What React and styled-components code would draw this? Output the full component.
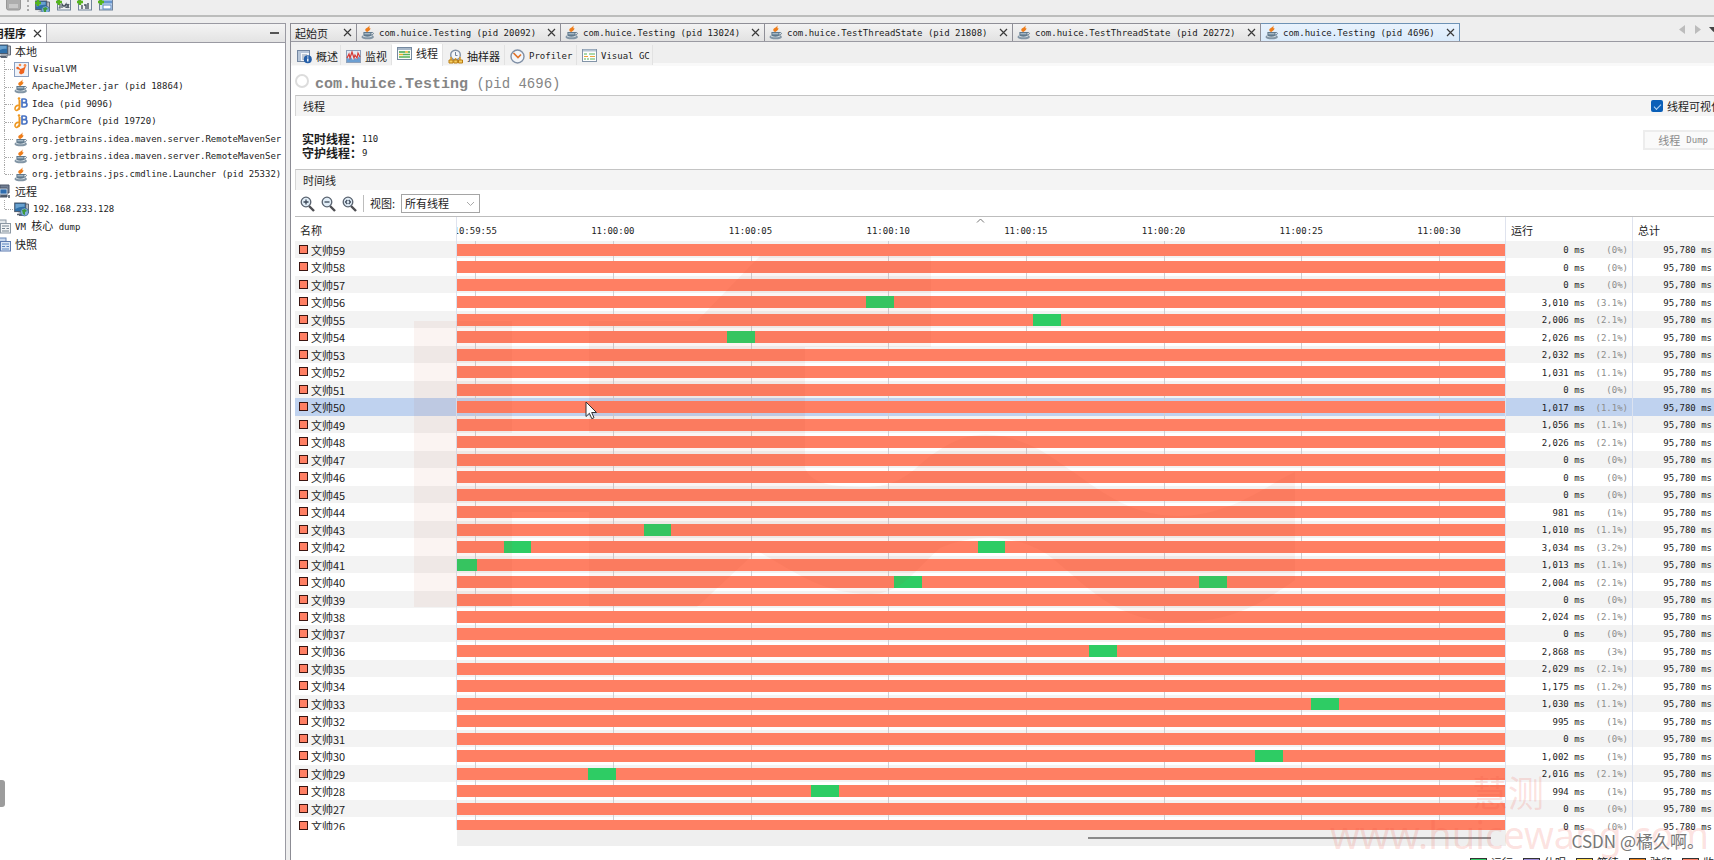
import React from "react";
import styled, { createGlobalStyle, css } from "styled-components";

const latin = `"DejaVu Sans Mono", "Noto Sans CJK SC", monospace`;
const cjk = `"Noto Sans CJK SC", "Liberation Sans", sans-serif`;
const BLOCKED = "#ff7f63";
const RUNNING = "#2ecc64";

const Global = createGlobalStyle`
  * { box-sizing: border-box; }
  body { margin: 0; background: #eeeeee; color: #1c1c1c; font: 9px/17px ${latin}; }
  button, select, input { font: inherit; color: inherit; margin: 0; }
`;

const App_ = styled.div`
  position: relative;
  height: 100vh;
  display: flex;
  flex-direction: column;
  overflow: hidden;
  white-space: nowrap;
`;

const Toolbar = styled.header`
  height: 17px;
  flex: none;
  margin-bottom: 6px;
  padding-left: 6px;
  display: flex;
  align-items: flex-start;
  gap: 6px;
  overflow: hidden;
  border-bottom: 2px solid #bcbdbc;
`;

const ToolButton = styled.button`
  display: block;
  width: 15px;
  height: 12px;
  padding: 0;
  border: 0;
  background: none;
  overflow: hidden;
  svg { display: block; }
`;

const ToolSeparator = styled.span`
  width: 1px;
  height: 11px;
  border-left: 2px dotted #aaaaaa;
`;

const Workspace = styled.div`
  flex: 1;
  min-height: 0;
  display: flex;
  gap: 4px;
`;

const Sidebar = styled.aside`
  width: 286px;
  flex: none;
  background: #ffffff;
  border: solid #9a9aa2;
  border-width: 1px 1px 0 0;
  overflow: hidden;
`;

const SideTabs = styled.div`
  height: 19px;
  display: flex;
  align-items: center;
  justify-content: space-between;
  padding-right: 6px;
  border-bottom: 1px solid #9a9aa2;
  background: linear-gradient(#f4f4f4, #e3e3e3);
`;

const SideTab = styled.div`
  height: 18px;
  margin-left: -18px;
  padding-right: 4px;
  display: flex;
  align-items: center;
  gap: 7px;
  background: #ffffff;
  border-right: 1px solid #9a9aa2;
  font: bold 11px/17px ${cjk};
`;

const IconButton = styled.button`
  display: grid;
  place-items: center;
  width: 9px;
  height: 12px;
  padding: 0;
  border: 0;
  background: none;
  flex: none;
`;

const Tree = styled.ul`
  list-style: none;
  margin: 0;
  padding: 0;
`;

const TreeRow = styled.li`
  height: 17px;
  display: flex;
  align-items: center;
  gap: 4px;
  padding-left: ${(p) => (p.$child ? 4 : 0)}px;
  margin-left: ${(p) => (p.$child ? 0 : -4)}px;
  &:nth-child(even) { height: 18px; }
  svg { flex: none; }
`;

const Branch = styled.span`
  flex: none;
  align-self: stretch;
  width: 9px;
  margin-right: -3px;
  border-left: 1px dotted #a8a8a8;
  height: ${(p) => (p.$last ? "9px" : "auto")};
  &::after {
    content: "";
    display: block;
    height: 9px;
    border-bottom: 1px dotted #a8a8a8;
  }
`;

const Zh = styled.span`
  font: 11px/17px ${cjk};
`;

const Editor = styled.main`
  flex: 1;
  min-width: 0;
  display: flex;
  flex-direction: column;
  background: #ffffff;
  border-left: 1px solid #8c8c94;
`;

const FileTabs = styled.nav`
  height: 19px;
  flex: none;
  display: flex;
  background: #eeeeee;
  border-bottom: 1px solid #9a9aa2;
`;

const FileTab = styled.div`
  display: flex;
  align-items: center;
  justify-content: space-between;
  width: ${(p) => p.$width}px;
  padding: 0 4px;
  border: 1px solid #8f8f97;
  border-left-width: 0;
  border-bottom: 0;
  background: linear-gradient(#f3f3f3, #e2e2e2);
  ${(p) =>
    p.$active &&
    css`
      border-color: #6d92b5;
      background: linear-gradient(#e9f3fd, #d9eafb);
    `}
`;

const FileLabel = styled.button`
  display: flex;
  align-items: center;
  gap: 4px;
  height: 17px;
  padding: 0;
  border: 0;
  background: none;
  span { padding-top: 1px; }
`;

const TabNav = styled.div`
  flex: 1;
  display: flex;
  justify-content: flex-end;
  align-items: center;
  gap: 7px;
  height: 12px;
  margin-right: -4px;
`;

const ViewTabs = styled.nav`
  flex: none;
  height: 24px;
  display: flex;
  align-items: flex-end;
  padding: 0 1px 1px;
  background: linear-gradient(#efefef 21px, #f9f9f9 21px);
`;

const ViewTab = styled.button`
  height: ${(p) => (p.$active ? 22 : 20)}px;
  width: ${(p) => p.$width}px;
  margin-bottom: ${(p) => (p.$active ? -1 : 0)}px;
  padding: ${(p) => (p.$active ? "0 5px 3px" : "2px 5px 0")};
  display: flex;
  align-items: center;
  gap: 4px;
  border: 0;
  border-right: 1px solid #e2e2e2;
  background: ${(p) => (p.$active ? "#ffffff" : "#f1f1f1")};
  svg { flex: none; }
`;

const Content = styled.div`
  flex: 1;
  min-height: 0;
  display: flex;
  flex-direction: column;
  padding-left: 4px;
`;

const Title = styled.h1`
  flex: none;
  height: 29px;
  margin: 0;
  padding-top: 7px;
  display: flex;
  align-items: center;
  gap: 6px;
  color: #858585;
  font: bold 15px/20px "Liberation Mono", monospace;
  span { font-weight: normal; font-size: 14px; white-space: pre; }
`;

const Ring = styled.i`
  width: 14px;
  height: 14px;
  margin-bottom: 6px;
  border: 2px solid #dcdcdc;
  border-radius: 50%;
`;

const SectionHead = styled.div`
  flex: none;
  height: 21px;
  padding-left: 7px;
  display: flex;
  align-items: center;
  justify-content: space-between;
  background: #f4f4f4;
  border-top: 1px solid #c4c4c4;
  border-left: 1px solid #d6d6d6;
  h2 { margin: 0; font: 11px/20px ${cjk}; }
`;

const CheckLabel = styled.label`
  display: flex;
  align-items: center;
  gap: 4px;
  margin-right: -8px;
  font: 11px/20px ${cjk};
`;

const Check = styled.input`
  appearance: none;
  width: 12px;
  height: 12px;
  border-radius: 2px;
  background: #0a5fb8;
  display: grid;
  place-items: center;
  &:checked::after {
    content: "";
    width: 6px;
    height: 3px;
    border: solid #b5d6f5;
    border-width: 0 0 1px 1px;
    transform: rotate(-45deg);
  }
`;

const Details = styled.div`
  flex: none;
  height: 53px;
  padding: 14px 0 0 7px;
  display: flex;
  align-items: flex-start;
  justify-content: space-between;
`;

const Stats = styled.dl`
  margin: 0;
  padding-top: 2px;
  display: grid;
  grid-template-columns: 60px auto;
  font: 9px/14px ${latin};
  dt { font: bold 12px/14px ${cjk}; }
  dd { margin: 0; }
`;

const DumpButton = styled.button`
  display: flex;
  align-items: center;
  gap: 6px;
  height: 20px;
  padding: 0 14px 0 13px;
  margin-right: -10px;
  border: 2px solid #ededed;
  background: #fafafa;
  color: #8a8a8a;
`;

const ViewBar = styled.div`
  flex: none;
  height: 26px;
  display: flex;
  align-items: center;
  gap: 6px;
  padding: 1px 0 0 5px;
  font: 11px/17px ${cjk};
`;

const ZoomButton = styled(IconButton)`
  width: 15px;
  height: 16px;
`;

const Divider = styled.span`
  width: 1px;
  height: 17px;
  background: #bdbdbd;
`;

const SelectLabel = styled.label`
  display: flex;
  align-items: center;
  gap: 6px;
`;

const SelectWrap = styled.span`
  display: grid;
  align-items: center;
  svg { grid-area: 1 / 1; justify-self: end; margin-right: 5px; pointer-events: none; }
`;

const Select = styled.select`
  grid-area: 1 / 1;
  appearance: none;
  width: 79px;
  height: 19px;
  padding: 0 3px;
  border: 1px solid #a5a5a5;
  border-radius: 0;
  background: #ffffff;
`;

const TableArea = styled.div`
  position: relative;
  flex: 1;
  min-height: 0;
  overflow: hidden;
  border-top: 1px solid #bdbdbd;
`;

const Caret = styled.svg`
  position: absolute;
  top: 1px;
  left: 48%;
`;

const Table = styled.table`
  width: 100%;
  table-layout: fixed;
  border-collapse: separate;
  border-spacing: 0;
  th, td { padding: 0; }
`;

const HeadCell = styled.th`
  height: 24px;
  padding: 2px 0 0 5px !important;
  border-left: ${(p) => (p.$line ? "1px solid #dfe3ee" : "0")};
  text-align: left;
  font: 11px/17px ${cjk};
`;

const TimeHead = styled.th`
  border-left: 1px solid #dfe3ee;
`;

const Scale = styled.div`
  position: relative;
  height: 24px;
  overflow: hidden;
  font: 9px/28px ${latin};
`;

const TimeMark = styled.span`
  position: absolute;
  transform: translateX(-50%);
`;

const Row = styled.tr`
  height: 17px;
  background: #ffffff;
  &:nth-child(even) { height: 18px; }
  &:nth-child(22) { height: 17px; }
  &:nth-child(odd) { background: #f3f3f3; }
  ${(p) => p.$selected && css`&&& { background: #bfd2ef; }`}
`;

const NameCell = styled.td`
  font: 11px/17px ${cjk};
`;

const Name = styled.div`
  display: flex;
  align-items: center;
  gap: 3px;
  height: 17px;
  padding: 1px 0 0 4px;
`;

const State = styled.i`
  width: 9px;
  height: 9px;
  margin-bottom: 2px;
  border: 1px solid #3a1410;
  background: ${BLOCKED};
`;

const LaneCell = styled.td`
  height: inherit;
  border-left: 1px solid #dbe2f0;
  vertical-align: top;
`;

const Lane = styled.div`
  position: relative;
  height: 17px;
  padding-top: 3px;
`;

const Tick = styled.i`
  position: absolute;
  top: 0;
  height: 18px;
  width: 1px;
  background: #cfcfd2;
`;

const Bar = styled.div`
  position: relative;
  height: 12px;
  background: ${BLOCKED};
`;

const Run = styled.i`
  position: absolute;
  top: 0;
  height: 12px;
  background: ${RUNNING};
`;

const TimeCell = styled.td`
  height: inherit;
  border-left: 1px solid #dbe2f0;
  font: 9px/17px ${latin};
  text-align: right;
  overflow: hidden;
`;

const Duration = styled.div`
  display: grid;
  grid-template-columns: 1fr 43px;
  height: 17px;
  padding: 2px 4px 0 0;
  line-height: 15px;
  span { color: #8d8d8d; }
`;

const Total = styled.div`
  height: 17px;
  padding: 2px 2px 0 0;
  line-height: 15px;
`;

const ScrollRow = styled.div`
  flex: none;
  height: 16px;
  margin: 0 208px 0 162px;
  padding: 7px 15px 0 0;
  background: #efefef;
`;

const Thumb = styled.div`
  height: 2px;
  width: 39%;
  margin-left: auto;
  background: #8b8b8b;
`;

const Legend = styled.ul`
  flex: none;
  height: 14px;
  margin: 0 -21px 0 0;
  padding: 8px 0 0;
  display: flex;
  justify-content: flex-end;
  align-items: flex-start;
  list-style: none;
  font: 11px/17px ${cjk};
  li { width: 53px; display: flex; align-items: center; gap: 4px; flex: none; }
`;

const Swatch = styled.i`
  width: 17px;
  height: 9px;
  border: 1px solid #333333;
  background: ${(p) => p.$color};
`;

const Handle = styled.div`
  position: absolute;
  left: 0;
  bottom: 53px;
  width: 5px;
  height: 27px;
  border-radius: 0 3px 3px 0;
  background: #9c9c9c;
`;

const Pointer = styled.svg`
  position: absolute;
  left: 585px;
  top: 401px;
`;

const Mark = styled.svg`
  position: absolute;
  left: 414px;
  top: 256px;
  pointer-events: none;
`;

const Brand = styled.div`
  position: absolute;
  right: 0;
  bottom: 6px;
  width: 384px;
  text-align: center;
  color: rgba(238, 80, 66, 0.17);
  font: 36px/46px ${cjk};
  pointer-events: none;
  p { margin: 0; padding-right: 28px; }
  p + p { padding: 0; font: 38px/40px "Noto Sans", sans-serif; text-align: left; }
`;

const Credit = styled.div`
  position: absolute;
  right: 10px;
  bottom: 7px;
  color: #777777;
  font: 17px/24px ${cjk};
  text-shadow: 0 0 2px #ffffff, 0 0 2px #ffffff;
`;

/* Icons */
const Cross = () => (
  <svg width="9" height="9" viewBox="0 0 9 9" aria-hidden="true">
    <path d="M1 1l7 7M8 1L1 8" stroke="#3a3a3a" strokeWidth="1.2" />
  </svg>
);

const Java = () => (
  <svg width="14" height="15" viewBox="0 0 14 15" aria-hidden="true">
    <ellipse cx="6.7" cy="12" rx="6.2" ry="2.3" fill="#8295a5" />
    <ellipse cx="6.5" cy="11.2" rx="4.4" ry="1.1" fill="#dce5ea" />
    <path d="M2.4 7h8v2.3c0 1.8-1.4 2.4-4 2.4s-4-.6-4-2.4z" fill="#60798d" />
    <path d="M10 7.6c3-.7 3.4 2 .2 2.4" fill="none" stroke="#60798d" />
    <path d="M3.4 8.8h6" stroke="#c3d2dc" />
    <path d="M8 .3C8.6 2.6 3.7 3 4.3 5.2c.2 1 1.3 1.6 2 1.8C7.5 6 9.6 5.3 9.4 3.2 9 2.8 8.3 3.3 8.2 3.5 8.6 2.3 8.7 1.2 8 .3z" fill="#ef7d1a" />
  </svg>
);

const JetBrains = () => (
  <svg width="14" height="15" viewBox="0 0 14 15" aria-hidden="true">
    <path d="M5.5 3v7c0 1.500-1 2.500-2 2.500" fill="none" stroke="#ee9822" strokeWidth="2" />
    <path d="M5 8.500C2.500 8 .5 10 1.200 12.500c1 2 3 .5 4-1.500" fill="none" stroke="#ee9822" strokeWidth="1.600" />
    <path d="M8 1.500v9M8 2h2.500c2.500 0 2.500 3.600 0 3.600H8M10.500 5.700c3.300 0 3.300 4.300 0 4.300H8" fill="none" stroke="#4a74c4" strokeWidth="1.700" />
    <circle cx="5" cy="1.600" r="1.300" fill="#ee9822" />
  </svg>
);

const VisualVM = () => (
  <svg width="15" height="15" viewBox="0 0 15 15" aria-hidden="true">
    <rect x=".5" y=".5" width="14" height="14" fill="#eef3fa" stroke="#8a9fc0" />
    <path d="M4 5l2.500 2L9 6l3-2-1.500 4L10 11l-3 1.500L5 11l1-3-2.500-1z" fill="#ee6420" />
    <circle cx="6" cy="3" r="1.300" fill="#f58a4c" /><circle cx="11" cy="3.500" r="1.400" fill="#f58a4c" />
    <circle cx="3.500" cy="6" r="1.200" fill="#ee6420" />
  </svg>
);

const Computer = ({ globe, plus }) => (
  <svg width="15" height="15" viewBox="0 0 15 15" aria-hidden="true">
    <path d="M3 2h11.500v9H11v2.500H5" fill="#b9bdc4" stroke="#636b78" />
    <rect x=".7" y="1" width="11" height="8.600" fill="#2f70aa" stroke="#4a586b" />
    <path d="M1.500 2h9v3c-3-.5-6 .5-9 2z" fill="#6aa2cf" />
    <path d="M3 12.500h7" stroke="#555f6e" strokeWidth="1.500" />
    {globe && <g><circle cx="10.500" cy="10" r="4" fill="#7fb0dc" stroke="#2d5a85" strokeWidth=".6" /><path d="M8 8l3-1 2 2-2 1v3l-2-1z" fill="#3f9a3a" /></g>}
    {plus && <path d="M3 0v6M0 3h6" stroke="#55b51c" strokeWidth="2.400" />}
  </svg>
);

const Remote = () => (
  <svg width="15" height="15" viewBox="0 0 15 15" aria-hidden="true">
    <path d="M4 1h9v8H4zM1 4h10v9H1z" fill="#707e93" stroke="#4a5568" />
    <rect x="4" y="5" width="7" height="5" fill="#2e6cae" stroke="#d7e1ea" strokeWidth=".8" />
    <path d="M5 12h6M13 11v3" stroke="#46505e" strokeWidth="1.500" />
  </svg>
);

const Sheets = ({ blue }) => (
  <svg width="15" height="15" viewBox="0 0 15 15" aria-hidden="true">
    <rect x="1" y="1" width="9" height="9" fill={blue ? "#c9d9ee" : "#e4e8eb"} stroke={blue ? "#6b87b5" : "#8c98a3"} />
    <rect x="4.500" y="4.500" width="10" height="9.500" fill={blue ? "#dde8f6" : "#f2f4f5"} stroke={blue ? "#5d7bb0" : "#8c98a3"} />
    <path d="M6 7h7M6 9.500h3M10.500 9.500h2.500M6 12h7" stroke={blue ? "#5d86c0" : "#75838f"} />
  </svg>
);

const Connection = ({ kind }) => (
  <svg width="15" height="12" viewBox="0 0 15 12" aria-hidden="true">
    <rect x="1.500" y="-3" width="13" height="13" fill={kind === "snapshot" ? "#d9e6f6" : "#eef1f3"} stroke="#71839a" />
    {kind === "jmx" && <path d="M4 4v4H2.500M6 8V4l2 2.500L10 4v4M11 4l2 4M13 4l-2 4" fill="none" stroke="#46525f" strokeWidth="1.200" />}
    {kind === "dump" && <path d="M5 5v4M7 5h2v4M11 3v6" fill="none" stroke="#46525f" strokeWidth="1.400" />}
    {kind === "snapshot" && <g><path d="M2 2h12" stroke="#6796cf" strokeWidth="3" /><rect x="5" y="5" width="8" height="4" fill="#fff" stroke="#5686c2" /></g>}
    <path d="M3 -1v6M0 2h6" stroke="#55b51c" strokeWidth="2.400" />
  </svg>
);

const Disk = () => (
  <svg width="15" height="12" viewBox="0 0 15 12" aria-hidden="true">
    <rect x=".5" y="-3" width="14" height="13" rx="2" fill="#adadad" stroke="#969696" />
    <rect x="3" y="4" width="9" height="4" fill="#c9c9c9" />
  </svg>
);

const Overview = () => (
  <svg width="15" height="15" viewBox="0 0 15 15" aria-hidden="true">
    <rect x=".5" y="1.500" width="12" height="11" fill="#f5f8fb" stroke="#7487a1" />
    <path d="M1 2h11v2H1zM1 2h3v10H1z" fill="#b7c6d9" />
    <path d="M5 6h5M5 8h4M5 10h2" stroke="#8998ab" />
    <circle cx="10.800" cy="10.200" r="4" fill="#255fa9" /><path d="M10.800 9.500v3M10.800 7.500v1" stroke="#fff" strokeWidth="1.400" />
  </svg>
);

const Monitor = () => (
  <svg width="15" height="15" viewBox="0 0 15 15" aria-hidden="true">
    <rect x=".5" y="1.500" width="14" height="12" fill="#e2eaf4" stroke="#8da0ba" />
    <path d="M1 13V8l2 2 2-2 2 3 2-2 2 1 2-3 1 2v4z" fill="#6c9fd2" />
    <path d="M1 9l2-4 1 4 2-6 2 6 1-3 2 3 1-5 2 4" fill="none" stroke="#d63a35" strokeWidth="1.200" />
  </svg>
);

const Threads = () => (
  <svg width="15" height="14" viewBox="0 0 15 14" aria-hidden="true">
    <rect x=".5" y=".5" width="14" height="12" fill="#fafcfa" stroke="#7589a0" />
    <path d="M1 2h13" stroke="#a8b8c9" strokeWidth="2" />
    <path d="M2 5h6M11 5h2" stroke="#3fa548" strokeWidth="1.500" /><path d="M8 5h3M2 7.500h4" stroke="#e9b12d" strokeWidth="1.500" />
    <path d="M6 7.500h7M2 10h11" stroke="#55b055" strokeWidth="1.400" />
  </svg>
);

const Gc = () => (
  <svg width="15" height="14" viewBox="0 0 15 14" aria-hidden="true">
    <rect x=".5" y=".5" width="14" height="12" fill="#fdfefd" stroke="#8294a8" />
    <path d="M1 1.500h13" stroke="#b6c4d3" strokeWidth="2" />
    <path d="M2 5h3M7 5h6" stroke="#57b357" /><path d="M2 7.500h4M8 7.500h5" stroke="#eda23a" /><path d="M2 10h2M5 10h2M8 10h5" stroke="#57b357" />
  </svg>
);

const Clock = ({ sampler }) => (
  <svg width="15" height="15" viewBox="0 0 15 15" aria-hidden="true">
    <circle cx="7.500" cy={sampler ? 6 : 7.5} r={sampler ? 4.8 : 6.5} fill="#f3f6fa" stroke="#8090a6" strokeWidth="1.400" />
    {sampler ? (
      <g><path d="M7.500 3v3.500h2" fill="none" stroke="#71819a" /><path d="M3 8v5M7.500 9v4M12 8v5" stroke="#dd9920" strokeWidth="1.500" /><path d="M1 11h4v3H1zM5.800 11h3.600v3H5.800zM10.500 11h4v3h-4z" fill="#f7cf62" stroke="#b97c12" /></g>
    ) : (
      <path d="M3.500 4l4.500 4.500 3-3" fill="none" stroke="#e0742b" strokeWidth="1.700" />
    )}
  </svg>
);

const Magnifier = ({ kind }) => (
  <svg width="15" height="16" viewBox="0 0 15 16" aria-hidden="true">
    <path d="M9 10l5 5" stroke="#4e4e52" strokeWidth="2.400" />
    <circle cx="6" cy="6" r="4.800" fill="#e1edf7" stroke="#59626f" strokeWidth="1.300" />
    {kind === "fit" ? (
      <path d="M5.300 4L3.500 6l1.800 2M6.700 4l1.800 2-1.800 2" fill="none" stroke="#3c4858" strokeWidth="1.200" />
    ) : (
      <path d={kind === "in" ? "M3.500 6h5M6 3.500v5" : "M3.500 6h5"} stroke="#3c4858" strokeWidth="1.300" />
    )}
  </svg>
);

/* Data */
const files = [
  ["com.huice.Testing (pid 20092)", 204],
  ["com.huice.Testing (pid 13024)", 204],
  ["com.huice.TestThreadState (pid 21808)", 248],
  ["com.huice.TestThreadState (pid 20272)", 248],
  ["com.huice.Testing (pid 4696)", 199],
];

const views = [
  ["概述", <Overview />, 49],
  ["监视", <Monitor />, 51],
  ["线程", <Threads />, 51],
  ["抽样器", <Clock sampler />, 62],
  ["Profiler", <Clock />, 72],
  ["Visual GC", <Gc />, 76],
];

const processes = [
  ["VisualVM", <VisualVM />],
  ["ApacheJMeter.jar (pid 18864)", <Java />],
  ["Idea (pid 9096)", <JetBrains />],
  ["PyCharmCore (pid 19720)", <JetBrains />],
  ["org.jetbrains.idea.maven.server.RemoteMavenSer", <Java />],
  ["org.jetbrains.idea.maven.server.RemoteMavenSer", <Java />],
  ["org.jetbrains.jps.cmdline.Launcher (pid 25332)", <Java />],
];

/* Running time and share of each thread, from 59 down to 26 */
const times = `0|0 0|0 0|0 3,010|3.1 2,006|2.1 2,026|2.1 2,032|2.1 1,031|1.1 0|0 1,017|1.1 1,056|1.1 2,026|2.1
0|0 0|0 0|0 981|1 1,010|1.1 3,034|3.2 1,013|1.1 2,004|2.1 0|0 2,024|2.1 0|0 2,868|3 2,029|2.1 1,175|1.2
1,030|1.1 995|1 0|0 1,002|1 2,016|2.1 994|1 0|0 0|0`
  .split(/\s+/)
  .map((t) => t.split("|"));

/* Seconds since the left edge of the visible window */
const runs = {
  56: [[14.86, 1.02]], 55: [[20.93, 1]], 54: [[9.81, 1]], 43: [[6.78, 1]],
  42: [[1.7, 1], [18.91, 1]], 41: [[0, 0.72]], 40: [[15.88, 1], [26.95, 1.02]],
  36: [[22.96, 1]], 33: [[31.02, 1]], 30: [[28.98, 1.02]], 29: [[4.77, 1]], 28: [[12.87, 1]],
};
const SPAN = 38.06;
const pct = (s) => `${(s / SPAN) * 100}%`;
const marks = ["10:59:55", "11:00:00", "11:00:05", "11:00:10", "11:00:15", "11:00:20", "11:00:25", "11:00:30"]
  .map((label, i) => [label, 0.66 + i * 5]);

const legend = [["运行", RUNNING], ["休眠", "#9a8ad8"], ["等待", "#ffd94a"], ["驻留", "#f0861a"], ["监视", BLOCKED]];

export default function App() {
  return (
    <App_>
      <Global />
      <Toolbar>
        <ToolButton aria-label="保存"><Disk /></ToolButton>
        <ToolSeparator />
        <ToolButton aria-label="添加远程主机"><Computer globe plus /></ToolButton>
        <ToolButton aria-label="添加 JMX 连接"><Connection kind="jmx" /></ToolButton>
        <ToolButton aria-label="添加核心 dump"><Connection kind="dump" /></ToolButton>
        <ToolButton aria-label="添加快照"><Connection kind="snapshot" /></ToolButton>
      </Toolbar>
      <Workspace>
        <Sidebar>
          <SideTabs>
            <SideTab>应用程序<IconButton aria-label="关闭"><Cross /></IconButton></SideTab>
            <IconButton aria-label="最小化">
              <svg width="9" height="2"><path d="M0 1h9" stroke="#555" strokeWidth="2" /></svg>
            </IconButton>
          </SideTabs>
          <Tree>
            <TreeRow><Computer /><Zh>本地</Zh></TreeRow>
            {processes.map(([label, icon], i) => (
              <TreeRow key={i} $child><Branch $last={i === 6} />{icon}<span>{label}</span></TreeRow>
            ))}
            <TreeRow><Remote /><Zh>远程</Zh></TreeRow>
            <TreeRow $child><Branch $last /><Computer globe /><span>192.168.233.128</span></TreeRow>
            <TreeRow><Sheets /><span>VM <Zh>核心</Zh> dump</span></TreeRow>
            <TreeRow><Sheets blue /><Zh>快照</Zh></TreeRow>
          </Tree>
        </Sidebar>
        <Editor>
          <FileTabs>
            <FileTab $width={66}><FileLabel><Zh>起始页</Zh></FileLabel><IconButton aria-label="关闭"><Cross /></IconButton></FileTab>
            {files.map(([label, width], i) => (
              <FileTab key={label} $width={width} $active={i === 4}>
                <FileLabel><Java /><span>{label}</span></FileLabel>
                <IconButton aria-label="关闭"><Cross /></IconButton>
              </FileTab>
            ))}
            <TabNav>
              <IconButton aria-label="上一个"><svg width="6" height="9"><path d="M6 0v9L0 4.500z" fill="#bcbcbc" /></svg></IconButton>
              <IconButton aria-label="下一个"><svg width="6" height="9"><path d="M0 0v9l6-4.500z" fill="#bcbcbc" /></svg></IconButton>
              <IconButton aria-label="列表"><svg width="9" height="5"><path d="M0 0h9L4.500 5z" fill="#444" /></svg></IconButton>
            </TabNav>
          </FileTabs>
          <ViewTabs>
            {views.map(([label, icon, width], i) => (
              <ViewTab key={label} $width={width} $active={i === 2}>
                {icon}{i < 4 ? <Zh>{label}</Zh> : label}
              </ViewTab>
            ))}
          </ViewTabs>
          <Content>
            <Title><Ring /><div>com.huice.Testing<span> (pid 4696)</span></div></Title>
            <SectionHead>
              <h2>线程</h2>
              <CheckLabel><Check type="checkbox" defaultChecked />线程可视化</CheckLabel>
            </SectionHead>
            <Details>
              <Stats>
                <dt>实时线程：</dt><dd>110</dd>
                <dt>守护线程：</dt><dd>9</dd>
              </Stats>
              <DumpButton disabled><Zh>线程</Zh>Dump</DumpButton>
            </Details>
            <SectionHead><h2>时间线</h2></SectionHead>
            <ViewBar>
              <ZoomButton aria-label="放大"><Magnifier kind="in" /></ZoomButton>
              <ZoomButton aria-label="缩小"><Magnifier kind="out" /></ZoomButton>
              <ZoomButton aria-label="适合窗口"><Magnifier kind="fit" /></ZoomButton>
              <Divider />
              <SelectLabel>
                视图:
                <SelectWrap>
                  <Select><option>所有线程</option></Select>
                  <svg width="9" height="6"><path d="M1 1l3.500 3.500L8 1" fill="none" stroke="#aaa" /></svg>
                </SelectWrap>
              </SelectLabel>
            </ViewBar>
            <TableArea>
              <Table>
                <colgroup>
                  <col style={{ width: 161 }} /><col /><col style={{ width: 127 }} /><col style={{ width: 82 }} />
                </colgroup>
                <thead>
                  <tr>
                    <HeadCell>名称</HeadCell>
                    <TimeHead>
                      <Scale>
                        {marks.map(([label, at]) => <TimeMark key={label} style={{ left: pct(at) }}>{label}</TimeMark>)}
                      </Scale>
                    </TimeHead>
                    <HeadCell $line>运行</HeadCell>
                    <HeadCell $line>总计</HeadCell>
                  </tr>
                </thead>
                <tbody>
                  {times.map(([ms, share], i) => {
                    const id = 59 - i;
                    return (
                      <Row key={id} $selected={id === 50}>
                        <NameCell><Name><State />文帅{id}</Name></NameCell>
                        <LaneCell>
                          <Lane>
                            {marks.map(([label, at]) => <Tick key={label} style={{ left: pct(at) }} />)}
                            <Bar>
                              {(runs[id] || []).map(([from, len]) => (
                                <Run key={from} style={{ left: pct(from), width: pct(len) }} />
                              ))}
                            </Bar>
                          </Lane>
                        </LaneCell>
                        <TimeCell><Duration>{ms} ms<span>({share}%)</span></Duration></TimeCell>
                        <TimeCell><Total>95,780 ms</Total></TimeCell>
                      </Row>
                    );
                  })}
                </tbody>
              </Table>
              <Caret width="9" height="5"><path d="M1 4.500L4.500 1 8 4.500" fill="none" stroke="#777" /></Caret>
            </TableArea>
            <ScrollRow><Thumb /></ScrollRow>
            <Legend>
              {legend.map(([label, color]) => <li key={label}><Swatch $color={color} />{label}</li>)}
            </Legend>
          </Content>
        </Editor>
      </Workspace>
      <Handle />
      <Mark width="881" height="368" viewBox="414 256 881 368" aria-hidden="true">
        <path
          d="M414 321H512V433H589V321H697L760 256H931V347H805V468C812 484 830 487 868 487C905 486 915 466 936 452C975 425 1005 433 1040 450C1090 480 1120 516 1178 516C1230 516 1265 486 1295 472V580C1260 605 1230 622 1178 622C1110 622 1080 577 1045 553C1010 532 970 535 940 548C910 575 900 594 870 594C820 594 790 568 757 551L697 607H589V512H512V607H414Z"
          fill="rgba(190, 60, 30, 0.06)"
        />
      </Mark>
      <Pointer width="13" height="19" viewBox="0 0 13 19" aria-hidden="true">
        <path d="M1 1v14.500l3.400-3.200 2.400 5.400 2.200-1-2.300-5.200h4.800z" fill="#fff" stroke="#333" />
      </Pointer>
      <Brand><p>慧测</p><p>www.huicewang.com</p></Brand>
      <Credit>CSDN @橘久啊。</Credit>
    </App_>
  );
}
